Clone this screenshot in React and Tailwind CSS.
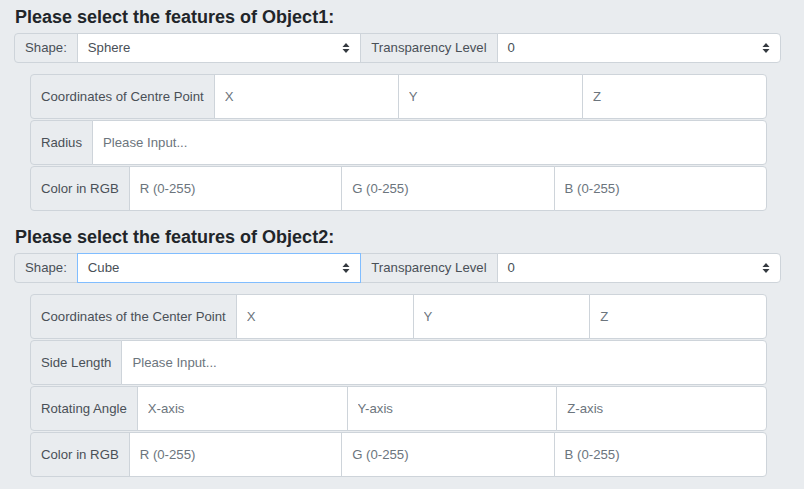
import { useState } from 'react';

const font = { fontFamily: '"Liberation Sans", Arial, sans-serif' };

function Arrows() {
  return (
    <svg width="8" height="12" viewBox="0 0 8 12" className="shrink-0">
      <path d="M4 1 L7.5 5 L0.5 5 Z" fill="#343a40" />
      <path d="M4 11 L7.5 7 L0.5 7 Z" fill="#343a40" />
    </svg>
  );
}

function Label({ children, first }) {
  return (
    <div
      className={
        'flex items-center px-[10px] bg-[#e9ecef] border border-[#ced4da] text-[#495057] whitespace-nowrap ' +
        (first ? 'rounded-l-[4px]' : '-ml-px')
      }
    >
      {children}
    </div>
  );
}

function Select({ value, focused, last }) {
  return (
    <div
      className={
        'relative flex-1 flex items-center justify-between px-[10px] bg-white border -ml-px ' +
        (focused ? 'border-[#80bdff] z-10 ' : 'border-[#ced4da] ') +
        (last ? 'rounded-r-[4px]' : '')
      }
    >
      <span className="text-[#495057]">{value}</span>
      <Arrows />
    </div>
  );
}

function TopRow({ shape, focused }) {
  return (
    <div className="flex h-[30px] ml-[14px] mr-[23px] text-[13.2px]">
      <Label first>Shape:</Label>
      <Select value={shape} focused={focused} />
      <Label>Transparency Level</Label>
      <Select value="0" last />
    </div>
  );
}

function InputRow({ label, fields }) {
  return (
    <div className="flex h-[45px] text-[13.2px]">
      <Label first>{label}</Label>
      {fields.map((f, i) => (
        <input
          key={f}
          placeholder={f}
          className={
            'flex-1 min-w-0 px-[10px] bg-white border border-[#ced4da] -ml-px outline-none placeholder:text-[#6c757d] ' +
            (i === fields.length - 1 ? 'rounded-r-[4px]' : '')
          }
        />
      ))}
    </div>
  );
}

function Section({ title, shape, focused, rows }) {
  return (
    <div>
      <h2 className="pl-[15px] text-[18px] leading-6 font-bold text-[#212529] mb-[4px]">{title}</h2>
      <TopRow shape={shape} focused={focused} />
      <div className="flex flex-col gap-px ml-[30px] mr-[37px] mt-[11px]">
        {rows.map((r) => (
          <InputRow key={r.label} label={r.label} fields={r.fields} />
        ))}
      </div>
    </div>
  );
}

export default function App() {
  const [objects] = useState([
    {
      title: 'Please select the features of Object1:',
      shape: 'Sphere',
      focused: false,
      rows: [
        { label: 'Coordinates of Centre Point', fields: ['X', 'Y', 'Z'] },
        { label: 'Radius', fields: ['Please Input...'] },
        { label: 'Color in RGB', fields: ['R (0-255)', 'G (0-255)', 'B (0-255)'] },
      ],
    },
    {
      title: 'Please select the features of Object2:',
      shape: 'Cube',
      focused: true,
      rows: [
        { label: 'Coordinates of the Center Point', fields: ['X', 'Y', 'Z'] },
        { label: 'Side Length', fields: ['Please Input...'] },
        { label: 'Rotating Angle', fields: ['X-axis', 'Y-axis', 'Z-axis'] },
        { label: 'Color in RGB', fields: ['R (0-255)', 'G (0-255)', 'B (0-255)'] },
      ],
    },
  ]);

  return (
    <div className="w-[804px] h-[489px] bg-[#e9ecef] pt-[5px] flex flex-col gap-[14px] overflow-hidden" style={font}>
      {objects.map((o) => (
        <Section key={o.title} {...o} />
      ))}
    </div>
  );
}
